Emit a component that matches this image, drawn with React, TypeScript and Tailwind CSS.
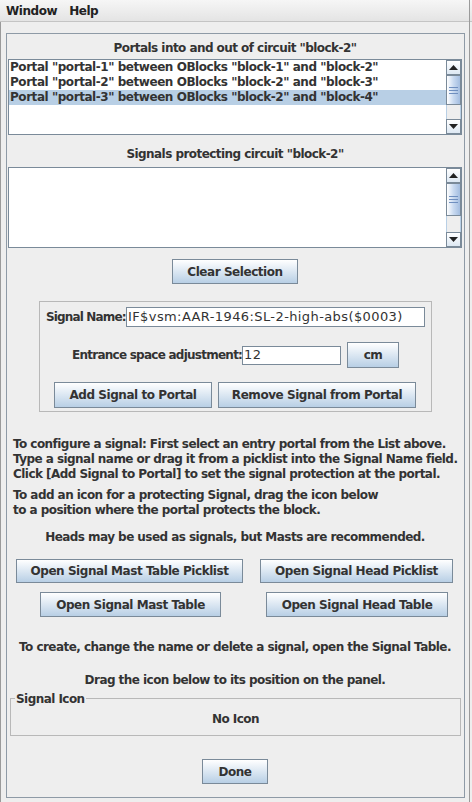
import React from "react";

const font = { fontFamily: '"DejaVu Sans", "Liberation Sans", sans-serif' };

function Button({ label, className }: { label: string; className: string }) {
  return (
    <div
      className={
        "flex shrink-0 items-center justify-center whitespace-nowrap border border-[#7a8a99] bg-gradient-to-b from-[#ffffff] to-[#b8cfe5] text-[12px] font-bold tracking-[-0.45px] text-[#333333] " +
        className
      }
    >
      {label}
    </div>
  );
}

function ScrollBar({ thumbH }: { thumbH: number }) {
  return (
    <div className="flex w-[15px] shrink-0 flex-col bg-[#eeeeee]">
      <div className="flex h-[15px] shrink-0 items-center justify-center border border-[#7a8a99] bg-gradient-to-b from-[#ffffff] to-[#dde8f3]">
        <svg width="9" height="5" viewBox="0 0 9 5">
          <path d="M0 5 L4.5 0 L9 5 Z" fill="#222" />
        </svg>
      </div>
      <div
        className="flex shrink-0 flex-col items-center justify-center gap-[2px] border border-[#7a8a99] bg-gradient-to-r from-[#ffffff] via-[#c9daf0] to-[#a3bde0]"
        style={{ height: thumbH }}
      >
        <div className="h-px w-[9px] bg-[#6f8fbf]" />
        <div className="h-px w-[9px] bg-[#6f8fbf]" />
        <div className="h-px w-[9px] bg-[#6f8fbf]" />
      </div>
      <div className="flex-1 border-x border-[#b8cfe5]" />
      <div className="flex h-[15px] shrink-0 items-center justify-center border border-[#7a8a99] bg-gradient-to-b from-[#ffffff] to-[#dde8f3]">
        <svg width="9" height="5" viewBox="0 0 9 5">
          <path d="M0 0 L9 0 L4.5 5 Z" fill="#222" />
        </svg>
      </div>
    </div>
  );
}

export default function App() {
  const portals = [
    'Portal "portal-1" between OBlocks "block-1" and "block-2"',
    'Portal "portal-2" between OBlocks "block-2" and "block-3"',
    'Portal "portal-3" between OBlocks "block-2" and "block-4"',
  ];

  return (
    <div
      className="relative h-[802px] w-[472px] overflow-hidden whitespace-nowrap bg-[#eeeeee] tracking-[-0.55px] text-[#333333]"
      style={font}
    >
      {/* menu bar */}
      <div className="flex h-[22px] items-center gap-[12px] border-b border-[#c4c4c4] bg-gradient-to-b from-[#f6f6f6] to-[#e4e4e4] pl-[6px] text-[12px] font-bold tracking-[-0.45px] text-[#222222]">
        <span>Window</span>
        <span>Help</span>
      </div>

      <div className="absolute left-0 top-[22px] h-[780px] w-px bg-[#9a9a9a]" />
      <div className="absolute right-[2px] top-0 h-[802px] w-px bg-[#9a9a9a]" />

      {/* main panel */}
      <div className="ml-[6px] mt-[11px] flex h-[765px] w-[459px] flex-col border border-[#8e9aa6] pl-px pr-[2px]">
        <div className="flex h-[25px] shrink-0 items-center justify-center pt-[2px] text-[12px] font-bold">
          Portals into and out of circuit "block-2"
        </div>
        <div className="flex h-[76px] shrink-0 border border-[#7a8a99] bg-white">
          <div className="flex-1 text-[12px] font-bold leading-[15px] tracking-[-0.45px]">
            {portals.map((p, i) => (
              <div key={i} className={"pl-px " + (i === 2 ? "bg-[#b8cfe5]" : "")}>
                {p}
              </div>
            ))}
          </div>
          <ScrollBar thumbH={30} />
        </div>

        <div className="flex h-[32px] shrink-0 items-center justify-center pt-[6px] text-[12px] font-bold">
          Signals protecting circuit "block-2"
        </div>
        <div className="flex h-[81px] shrink-0 border border-[#7a8a99] bg-white">
          <div className="flex-1" />
          <ScrollBar thumbH={33} />
        </div>

        <div className="mt-[11px] flex shrink-0 justify-center">
          <Button label="Clear Selection" className="h-[25px] w-[126px]" />
        </div>

        {/* signal config panel */}
        <div className="ml-[31px] mt-[17px] flex h-[111px] w-[393px] shrink-0 flex-col border border-[#b8b8b8] pt-[5px]">
          <div className="flex items-center pl-[6px] text-[12px] font-bold">
            <span className="w-[80px] tracking-[-0.85px]">Signal Name:</span>
            <div className="flex h-[20px] w-[299px] items-center border border-[#7a8a99] bg-white pl-px text-[13px] font-normal tracking-[0.4px]">
              IF$vsm:AAR-1946:SL-2-high-abs($0003)
            </div>
          </div>
          <div className="mt-[15px] flex items-center pl-[32px] text-[12px] font-bold">
            <span className="w-[170px] tracking-[-0.75px]">Entrance space adjustment:</span>
            <div className="flex h-[19px] w-[99px] items-center border border-[#7a8a99] bg-white pl-px text-[13px] font-normal tracking-[0.4px]">
              12
            </div>
            <Button label="cm" className="ml-[6px] h-[26px] w-[52px]" />
          </div>
          <div className="mt-[14px] flex gap-[6px] pl-[14px]">
            <Button label="Add Signal to Portal" className="h-[26px] w-[158px]" />
            <Button label="Remove Signal from Portal" className="h-[26px] w-[198px]" />
          </div>
        </div>

        {/* instructions */}
        <div className="mt-[25px] shrink-0 pl-[5px] text-[12px] font-bold leading-[15px]">
          <div>To configure a signal: First select an entry portal from the List above.</div>
          <div>Type a signal name or drag it from a picklist into the Signal Name field.</div>
          <div>Click [Add Signal to Portal] to set the signal protection at the portal.</div>
          <div className="mt-[6px]">To add an icon for a protecting Signal, drag the icon below</div>
          <div>to a position where the portal protects the block.</div>
        </div>
        <div className="mt-[10px] shrink-0 text-center text-[12px] font-bold">
          Heads may be used as signals, but Masts are recommended.
        </div>

        <div className="mt-[13px] flex shrink-0 justify-between pl-[8px] pr-[9px]">
          <Button label="Open Signal Mast Table Picklist" className="h-[24px] w-[227px]" />
          <Button label="Open Signal Head Picklist" className="h-[24px] w-[193px]" />
        </div>
        <div className="mt-[9px] flex shrink-0 justify-between pl-[32px] pr-[14px]">
          <Button label="Open Signal Mast Table" className="h-[25px] w-[181px]" />
          <Button label="Open Signal Head Table" className="h-[25px] w-[182px]" />
        </div>

        <div className="mt-[21px] shrink-0 text-center text-[12px] font-bold">
          To create, change the name or delete a signal, open the Signal Table.
        </div>
        <div className="mt-[15px] shrink-0 text-center text-[12px] font-bold">
          Drag the icon below to its position on the panel.
        </div>

        {/* signal icon titled border */}
        <div className="relative ml-[2px] mt-[9px] flex h-[38px] w-[451px] shrink-0 items-center justify-center border border-[#b8b8b8] pt-[4px] text-[12px] font-bold">
          <span className="absolute -top-[9px] left-[4px] bg-[#eeeeee] px-px">Signal Icon</span>
          No Icon
        </div>

        <div className="mt-[23px] flex shrink-0 justify-center">
          <Button label="Done" className="h-[25px] w-[66px]" />
        </div>
      </div>
    </div>
  );
}
